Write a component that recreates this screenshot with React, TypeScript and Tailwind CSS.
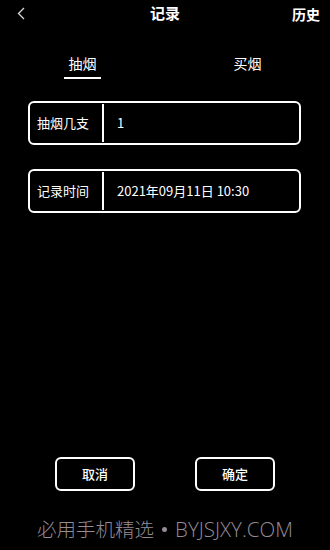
import React from 'react';

const font = { fontFamily: '"Noto Sans CJK SC", "Noto Sans", sans-serif' };

function Field({ label, value }: { label: string; value: string }) {
  return (
    <div className="flex h-[44px] items-center rounded-[6px] border-2 border-white">
      <div className="w-[72px] pl-[7px] text-[13px] text-white">{label}</div>
      <div className="h-[38px] w-[2px] bg-white" />
      <div className="pl-[13px] text-[13px] text-white">{value}</div>
    </div>
  );
}

export default function App() {
  return (
    <div className="flex h-[550px] w-[330px] flex-col bg-black" style={font}>
      {/* header */}
      <div className="relative flex h-[27px] items-center justify-center">
        <svg className="absolute left-[16px] top-[7px]" width="10" height="13" viewBox="0 0 10 13" fill="none">
          <path d="M8 1 L2.5 6.5 L8 12" stroke="#d8d8d8" strokeWidth="1.3" />
        </svg>
        <span className="text-[15px] font-bold text-white">记录</span>
        <span className="absolute right-[10px] top-[4px] text-[14px] font-bold text-white">历史</span>
      </div>

      {/* tabs */}
      <div className="mt-[26px] flex">
        <div className="flex w-[165px] justify-center">
          <div className="flex flex-col items-center">
            <span className="text-[14px] leading-[20px] text-white">抽烟</span>
            <div className="mt-[4px] h-[2px] w-[37px] bg-white" />
          </div>
        </div>
        <div className="flex w-[165px] justify-center">
          <span className="text-[14px] leading-[20px] text-white">买烟</span>
        </div>
      </div>

      {/* fields */}
      <div className="mt-[22px] flex flex-col gap-[24px] pl-[28px] pr-[29px]">
        <Field label="抽烟几支" value="1" />
        <Field label="记录时间" value="2021年09月11日 10:30" />
      </div>

      <div className="flex-1" />

      {/* buttons */}
      <div className="flex justify-between pl-[55px] pr-[55px]">
        <button className="h-[34px] w-[80px] rounded-[6px] border-2 border-white text-[13px] font-medium text-white">取消</button>
        <button className="h-[34px] w-[80px] rounded-[6px] border-2 border-white text-[13px] font-medium text-white">确定</button>
      </div>

      {/* watermark */}
      <div className="mb-[9px] mt-[26px] flex items-center justify-center font-light leading-[24px] text-[#958b96]">
        <span className="text-[19.5px]" style={{ fontFamily: '"Noto Sans CJK SC", sans-serif' }}>必用手机精选</span>
        <span className="mx-[8px] h-[5px] w-[5px] rounded-full bg-[#958b96]" />
        <span className="text-[20.5px]" style={{ fontFamily: '"Open Sans", sans-serif' }}>BYJSJXY.COM</span>
      </div>
    </div>
  );
}
